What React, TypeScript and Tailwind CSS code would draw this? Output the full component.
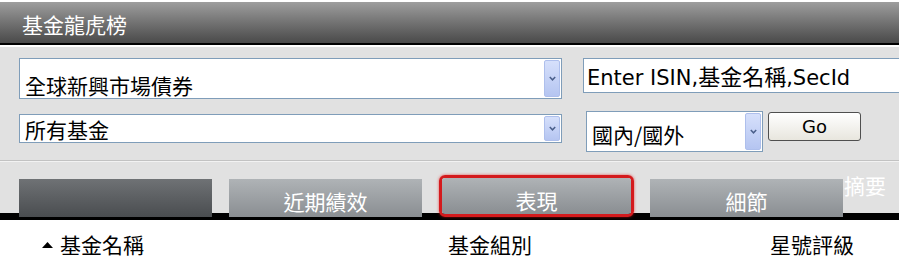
import React from 'react';

const cjk = "font-['Noto_Sans_CJK_TC','Noto_Sans_CJK_JP',sans-serif]";

const Arrow = () => (
  <div className="w-[16px] m-[1px] rounded-[2px] border border-[#aebfec] bg-gradient-to-b from-[#d6e0fb] to-[#b5c5f1] flex items-center justify-center">
    <svg width="7" height="5" viewBox="0 0 7 5">
      <path d="M0.8 1 L3.5 3.8 L6.2 1" fill="none" stroke="#4a5f8a" strokeWidth="1.5" />
    </svg>
  </div>
);

const Select = ({ label, className, textClass }) => (
  <div className={`flex shrink-0 border border-[#7f9db9] bg-white ${className}`}>
    <div className={`flex-1 pl-[5px] text-[21px] leading-[21px] text-black ${textClass}`}>{label}</div>
    <Arrow />
  </div>
);

const Tab = ({ label, className = '' }) => (
  <div className={`shrink-0 h-[38px] w-[193px] bg-gradient-to-b from-[#afb3b6] to-[#8a8e92] text-white text-center text-[21px] leading-[21px] pt-[12px] ${className}`}>
    {label}
  </div>
);

export default function App() {
  return (
    <div className={`w-[899px] h-[263px] overflow-hidden bg-white ${cjk}`}>
      <div className="mt-[2px] h-[41px] bg-gradient-to-b from-[#9e9e9e] to-[#4a4a4a] text-white text-[21px] leading-[21px] pl-[22px] pt-[12px]">
        基金龍虎榜
      </div>
      <div className="h-[2px] bg-black" />
      <div className="h-[2px] bg-white" />

      <div className="h-[113px] bg-[#e1e1e1] pl-[19px] pt-[11px] flex overflow-hidden">
        <div className="w-[543px] shrink-0 flex flex-col">
          <Select label="全球新興市場債券" className="h-[41px]" textClass="pt-[16px]" />
          <Select label="所有基金" className="h-[29px] mt-[15px]" textClass="pt-[4px]" />
        </div>
        <div className="ml-[21px] shrink-0 flex flex-col">
          <div className="h-[35px] w-[340px] border border-[#7f9db9] bg-white pl-[3px] pt-[6px] font-['DejaVu_Sans','Noto_Sans_CJK_TC',sans-serif] text-[21px] leading-[21px] text-black whitespace-nowrap">
            Enter ISIN,<span className={`${cjk} text-[22px]`}>基金名稱</span>,SecId
          </div>
          <div className="flex mt-[18px]">
            <Select label="國內/國外" className="ml-[3px] w-[177px] h-[41px]" textClass="pt-[12px]" />
            <button className="ml-[5px] mt-[1px] w-[93px] h-[29px] rounded-[3px] border border-[#4f4f4f] bg-gradient-to-b from-white to-[#e8e6de] font-['DejaVu_Sans',sans-serif] text-[18px] leading-[18px] text-black">
              Go
            </button>
          </div>
        </div>
      </div>
      <div className="h-[1px] bg-[#c2c2c2]" />
      <div className="h-[1px] bg-[#f2f2f2]" />

      <div className="h-[58px] bg-[#e1e1e1] border-b-[7px] border-black flex items-start pt-[17px]">
        <div className="shrink-0 ml-[19px] h-[38px] w-[193px] bg-gradient-to-b from-[#6f7275] to-[#4a4d50] relative" />
        <Tab label="近期績效" className="ml-[17px] w-[192px] relative" />
        <div className="shrink-0 ml-[17px] -mt-[4px] h-[42px] w-[195px] rounded-[6px] border-[3px] border-[#d41a1d] shadow-[0_0_3px_rgba(230,20,20,0.7)] overflow-hidden relative">
          <div className="h-full bg-gradient-to-b from-[#afb3b6] to-[#8a8e92] text-white text-center text-[21px] leading-[21px] pt-[12px]">
            表現
          </div>
        </div>
        <Tab label="細節" className="ml-[16px] relative" />
        <div className="shrink-0 ml-[1px] -mt-[4px] text-white text-[21px] leading-[21px]">摘要</div>
      </div>

      <div className="flex pt-[14px] text-[21px] leading-[21px] text-black">
        <div className="w-[448px] shrink-0 flex items-center">
          <svg className="ml-[42px]" width="11" height="6" viewBox="0 0 11 6">
            <polygon points="5.5,0 11,6 0,6" fill="#000" />
          </svg>
          <span className="ml-[7px]">基金名稱</span>
        </div>
        <div className="w-[322px] shrink-0">基金組別</div>
        <div>星號評級</div>
      </div>
    </div>
  );
}
